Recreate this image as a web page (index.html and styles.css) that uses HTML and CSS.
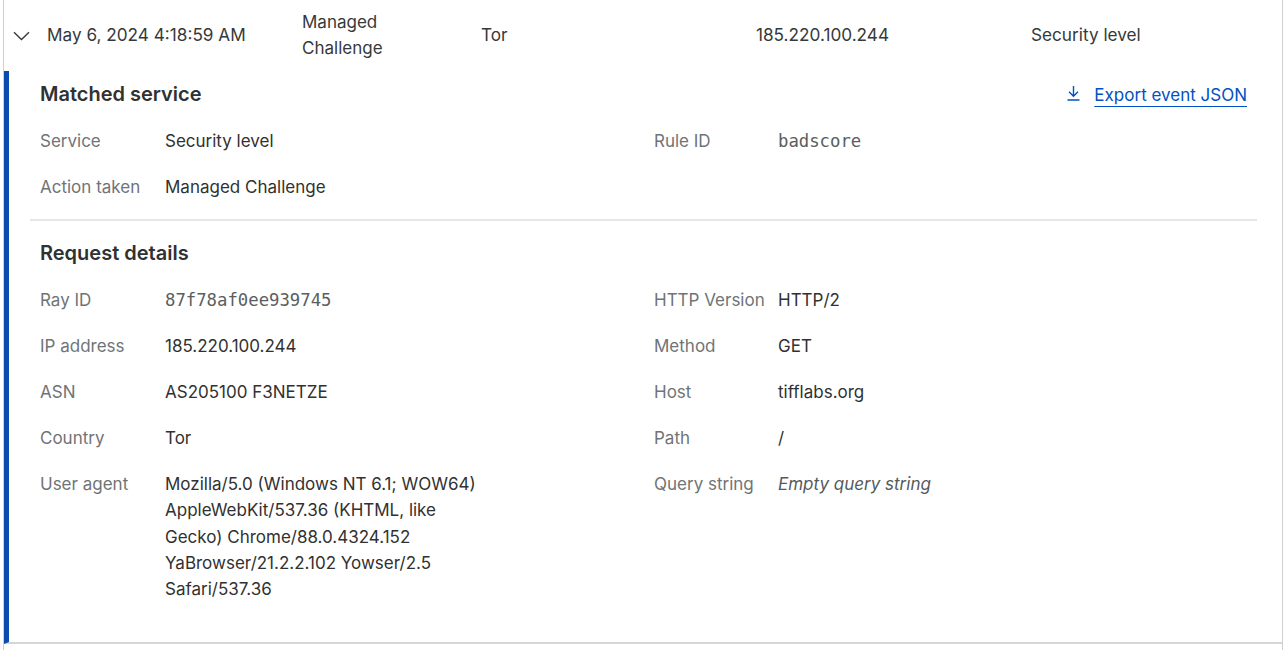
FILE: index.html
```html
<!DOCTYPE html>
<html lang="en">
<head>
<meta charset="utf-8">
<title>Event</title>
<link rel="stylesheet" href="styles.css">
</head>
<body>
<div class="event">
  <div class="summary">
    <div class="cell chev">
      <svg width="17" height="10" viewBox="0 0 17 10"><path d="M1 1.2 L8.5 8.5 L16 1.2" fill="none" stroke="#36393a" stroke-width="1.4"/></svg>
    </div>
    <div class="cell">May 6, 2024 4:18:59 AM</div>
    <div class="cell narrow">Managed Challenge</div>
    <div class="cell">Tor</div>
    <div class="cell">185.220.100.244</div>
    <div class="cell">Security level</div>
  </div>
  <div class="panel">
    <section class="section first">
      <div class="head">
        <h2>Matched service</h2>
        <a class="export" href="#">
          <svg width="15" height="16" viewBox="0 0 15 16"><path d="M7.5 1 V11 M3 6.8 L7.5 11.2 L12 6.8 M1.5 15 H13.5" fill="none" stroke="#0051c3" stroke-width="1.4"/></svg>
          <span>Export event JSON</span>
        </a>
      </div>
      <div class="grid">
        <div class="col">
          <div class="field"><span class="k">Service</span><span class="v">Security level</span></div>
          <div class="field"><span class="k">Action taken</span><span class="v">Managed Challenge</span></div>
        </div>
        <div class="col right">
          <div class="field"><span class="k">Rule ID</span><span class="v mono">badscore</span></div>
        </div>
      </div>
    </section>
    <section class="section second">
      <div class="head"><h2>Request details</h2></div>
      <div class="grid">
        <div class="col">
          <div class="field"><span class="k">Ray ID</span><span class="v mono">87f78af0ee939745</span></div>
          <div class="field"><span class="k">IP address</span><span class="v">185.220.100.244</span></div>
          <div class="field"><span class="k">ASN</span><span class="v">AS205100 F3NETZE</span></div>
          <div class="field"><span class="k">Country</span><span class="v">Tor</span></div>
          <div class="field"><span class="k">User agent</span><span class="v ua">Mozilla/5.0 (Windows NT 6.1; WOW64) AppleWebKit/537.36 (KHTML, like Gecko) Chrome/88.0.4324.152 YaBrowser/21.2.2.102 Yowser/2.5 Safari/537.36</span></div>
        </div>
        <div class="col right">
          <div class="field"><span class="k">HTTP Version</span><span class="v">HTTP/2</span></div>
          <div class="field"><span class="k">Method</span><span class="v">GET</span></div>
          <div class="field"><span class="k">Host</span><span class="v">tifflabs.org</span></div>
          <div class="field"><span class="k">Path</span><span class="v">/</span></div>
          <div class="field"><span class="k">Query string</span><span class="v em">Empty query string</span></div>
        </div>
      </div>
    </section>
  </div>
</div>
</body>
</html>
```
FILE: styles.css
```css
* { box-sizing: border-box; }
html, body { margin: 0; padding: 0; background: #fff; }
body {
  font-family: Inter, "Noto Sans", sans-serif;
  font-size: 17px;
  color: #36393a;
  line-height: 26px;
}
.event {
  margin-left: 3px;
  width: 1280px;
  border-left: 1px solid #cfcfcf;
  border-right: 1px solid #cfcfcf;
  height: 650px;
}
.summary {
  height: 70px;
  display: grid;
  grid-template-columns: 34px 255px 179px 275px 275px 1fr;
  align-items: center;
  padding-left: 9px;
  font-size: 17.2px;
}
.cell.chev { display: flex; align-items: center; padding-top: 2px; }
.cell.narrow { max-width: 110px; font-size: 17px; }
.panel {
  margin-top: 1px;
  border-left: 5px solid #0d4aae;
  border-bottom: 2px solid #d6d6d6;
  padding: 0 25px 0 21px;
}
.section { padding: 9px 10px 10px; }
.section.first { border-bottom: 2px solid #e6e6e6; }
.section.first .head { margin-bottom: 10px; }
.section.first .grid { margin-bottom: -1px; }
.section.second { padding-top: 18px; padding-bottom: 30px; }
.section.second .head { margin-bottom: 10px; }
.head {
  display: flex;
  justify-content: space-between;
  align-items: center;
  height: 28px;
  margin-bottom: 9px;
}
h2 {
  margin: 0;
  font-size: 20px;
  font-weight: 600;
  line-height: 28px;
  color: #313131;
}
.export {
  display: flex;
  align-items: center;
  gap: 13px;
  color: #0051c3;
  text-decoration: none;
  font-size: 17px;
  padding-top: 2px;
}
.export span {
  text-decoration: underline;
  text-underline-offset: 5px;
  text-decoration-thickness: 1px;
}
.export svg { margin-top: -4px; }
.grid {
  display: grid;
  grid-template-columns: 614px 1fr;
}
.field {
  display: grid;
  grid-template-columns: 125px 1fr;
  padding: 10px 0;
  line-height: 26px;
}
.right .field { grid-template-columns: 124px 1fr; }
.k { color: #6f7477; }
.v { color: #313131; }
.ua { max-width: 320px; line-height: 26.25px; }
.mono {
  font-family: "DejaVu Sans Mono", monospace;
  font-size: 17.3px;
  color: #5a5e61;
}
.em { font-style: italic; color: #555a5d; }
```
